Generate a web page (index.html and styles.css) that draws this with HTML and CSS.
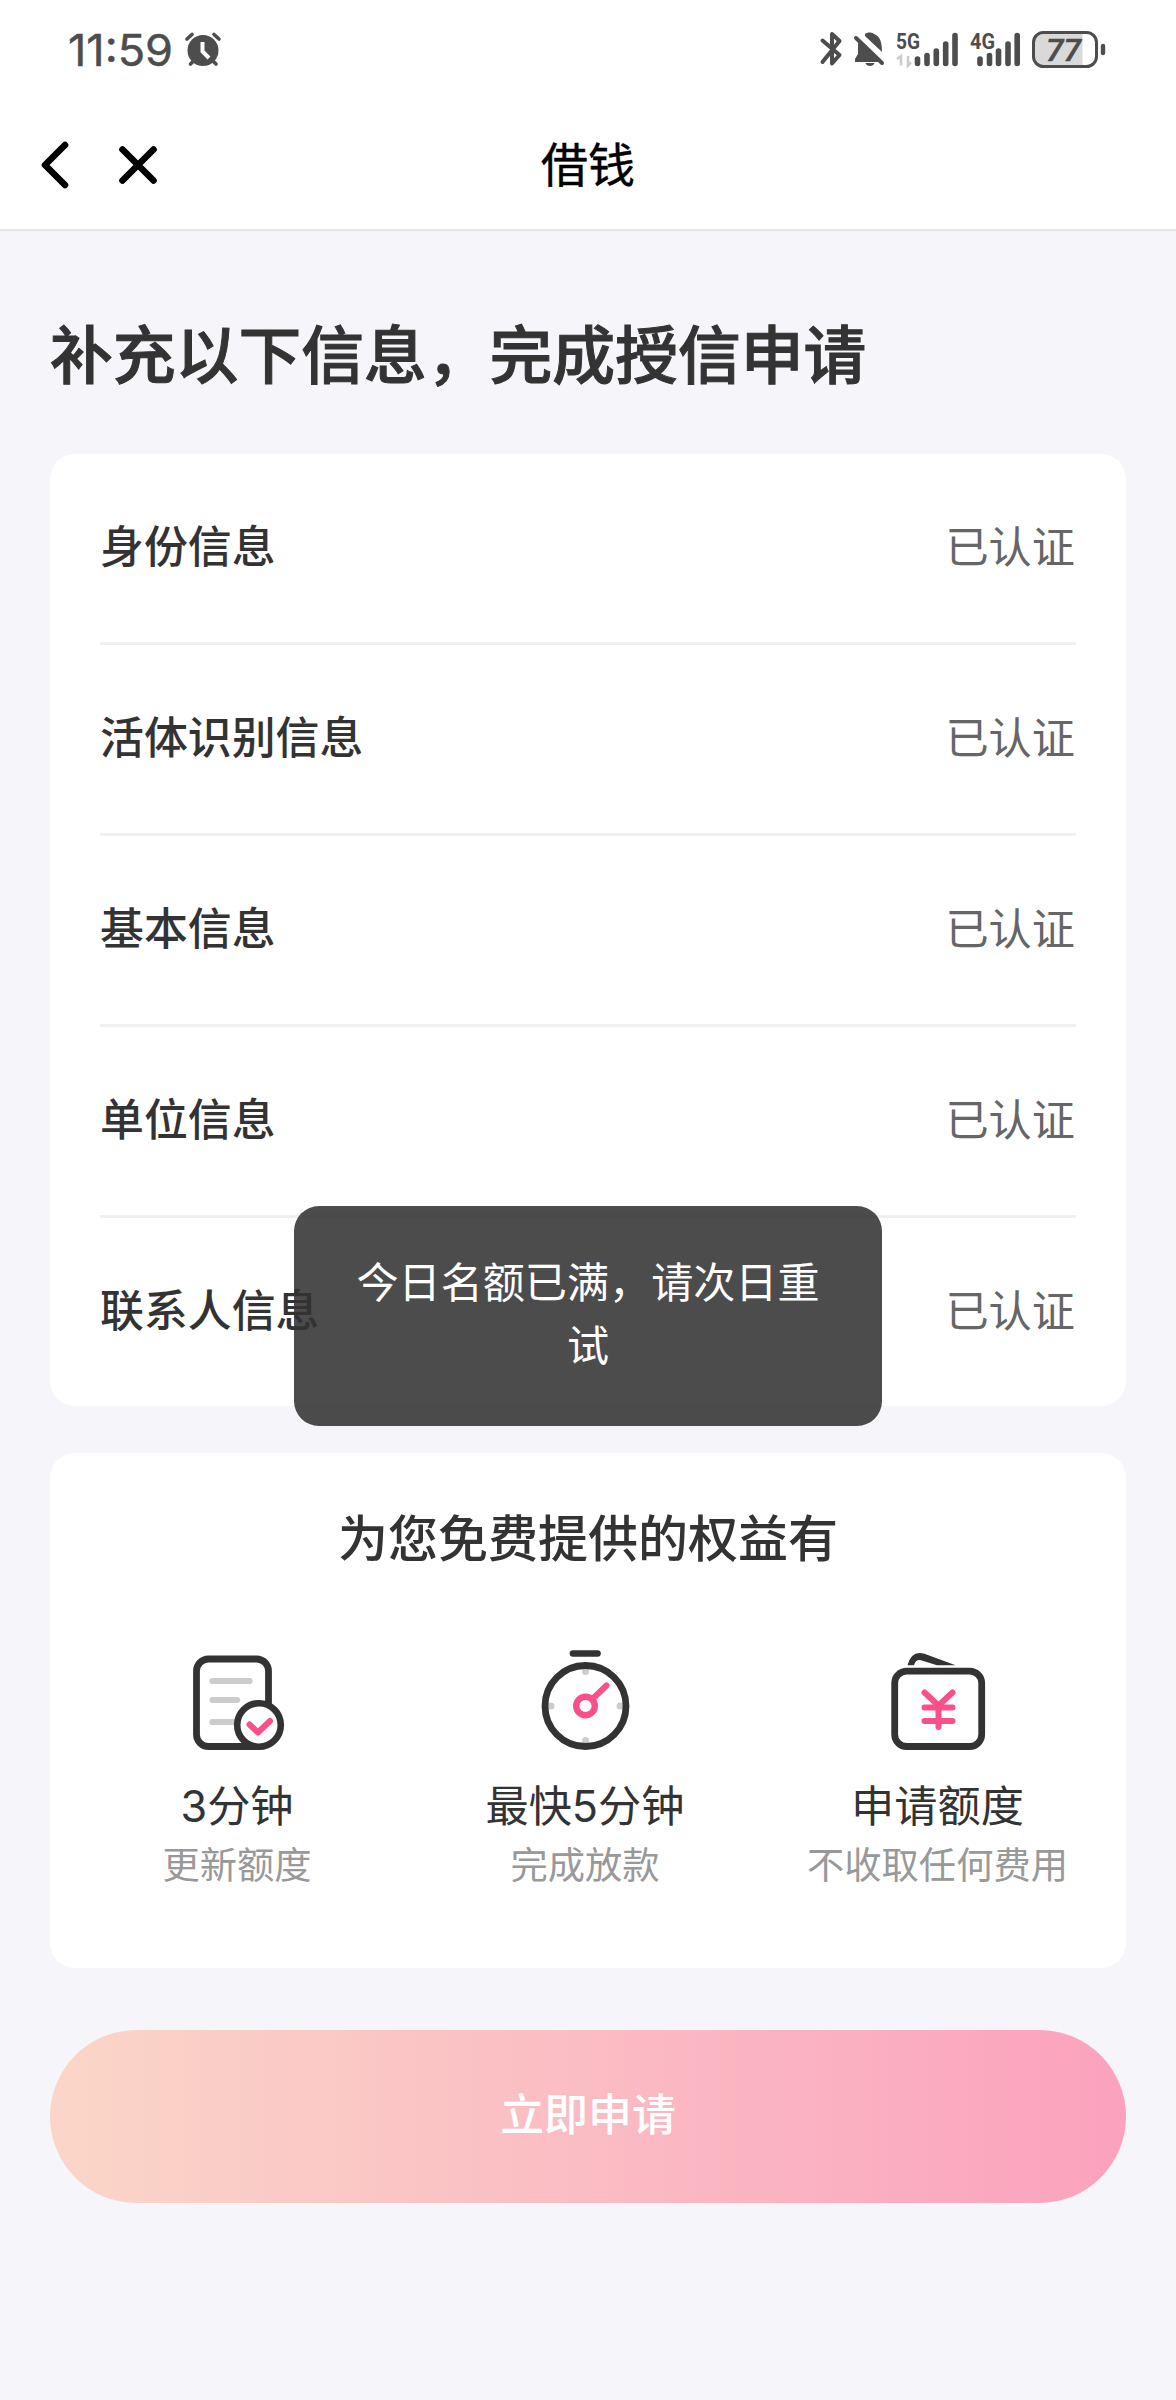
FILE: index.html
```html
<!DOCTYPE html>
<html lang="zh-CN">
<head>
<meta charset="utf-8">
<title>借钱</title>
<link rel="stylesheet" href="styles.css">
</head>
<body>
<header class="top">
  <div class="status">
    <div class="clock">
      <svg class="time" width="110" height="60" viewBox="66 20 110 60"><text x="68" y="65.500" textLength="105" lengthAdjust="spacingAndGlyphs">11:59</text></svg>
      <svg width="40" height="40" viewBox="183 30 40 40" fill="none" stroke="#4d4d4d" stroke-linecap="round">
        <circle cx="203" cy="50.500" r="15.500" fill="#4d4d4d" stroke="none"/>
        <path d="M187 39l5-4.500M219 39l-5-4.500M190.500 64l5-5M216 64l-5-5" stroke-width="3.600"/>
        <path d="M202.500 42v9.500l6.500 6.500" stroke="#fff" stroke-width="4" stroke-linecap="butt"/>
      </svg>
    </div>
    <svg class="signals" width="292" height="50" viewBox="816 25 292 50">
      <path d="M822.500 40.500l17 14.500-7.500 8.500V34l7.500 7L822.500 62" fill="none" stroke="#4d4d4d" stroke-width="4" stroke-linecap="round" stroke-linejoin="round"/>
      <path d="M865 34c2-2 7-2 9 0 6 2 8 8 8 18l-17-16zM860 40l22 22h-27v-3l3-5V44zM865.500 63h9c-1 4-8 4-9 0z" fill="#4d4d4d"/>
      <path d="M856 38l26 25" stroke="#4d4d4d" stroke-width="4" stroke-linecap="round"/>
      <text class="net" x="896" y="48.500" textLength="24" lengthAdjust="spacingAndGlyphs">5G</text>
      <g stroke="#ccc" stroke-width="2.600" fill="none"><path d="M897 59l4-3v9.500M908 56v9.500l3-3"/></g>
      <g stroke="#4d4d4d" stroke-width="5.600" stroke-linecap="round">
        <path d="M917.500 59v4.500M927 55.500v8M936.300 51v12.500M945.700 44v19.500M955 35.500v28"/>
        <path d="M980 59v4.500M989.500 55.500v8M998.500 51v12.500M1008 44v19.500M1017.200 35.500v28"/>
      </g>
      <text class="net" x="970" y="48.500" textLength="25" lengthAdjust="spacingAndGlyphs">4G</text>
      <path d="M1044 34h38.500v31.500H1044q-10 0-10-10V44q0-10 10-10z" fill="#d9d9d9"/>
      <rect x="1033.500" y="32.500" width="63" height="34" rx="10" fill="none" stroke="#4d4d4d" stroke-width="3"/>
      <path d="M1103 46v7" stroke="#4d4d4d" stroke-width="4.400" stroke-linecap="round"/>
      <text class="charge" x="1046" y="61" textLength="35" lengthAdjust="spacingAndGlyphs">77</text>
    </svg>
  </div>
  <nav class="nav">
    <svg class="nav-icons" width="124" height="60" viewBox="36 135 124 60" fill="none" stroke="#000" stroke-width="6.600" stroke-linecap="round" stroke-linejoin="round">
      <path d="M65 145L45 165l20 20"/><path d="M122.500 149.500l31 31M153.500 149.500l-31 31"/>
    </svg>
    <h1 class="nav-title">借钱</h1>
  </nav>
</header>
<main class="page">
  <h2 class="heading">补充以下信息，完成授信申请</h2>
  <ul class="card list">
    <li class="row"><span>身份信息</span><span class="done">已认证</span></li>
    <li class="row"><span>活体识别信息</span><span class="done">已认证</span></li>
    <li class="row"><span>基本信息</span><span class="done">已认证</span></li>
    <li class="row"><span>单位信息</span><span class="done">已认证</span></li>
    <li class="row"><span>联系人信息</span><span class="done">已认证</span></li>
  </ul>
  <section class="card benefits">
    <h3 class="benefits-title">为您免费提供的权益有</h3>
    <div class="benefit-grid">
      <div class="benefit">
        <svg width="110" height="110" viewBox="182 1645 110 110" fill="none" stroke="#333" stroke-linecap="round" stroke-linejoin="round">
          <rect x="196.500" y="1659" width="72" height="87.500" rx="12" stroke-width="6.800"/>
          <path d="M212.500 1681h37M212.500 1700h24.500M212.500 1722h27" stroke="#ccc" stroke-width="6.200"/>
          <circle cx="259" cy="1725" r="21.800" fill="#fff" stroke-width="6.600"/>
          <path d="M249.500 1724.500l8.500 8 12-11.500" stroke="#f9508a" stroke-width="6"/>
        </svg>
        <p class="benefit-name">3分钟</p>
        <p class="benefit-note">更新额度</p>
      </div>
      <div class="benefit">
        <svg width="110" height="110" viewBox="530 1645 110 110" fill="none" stroke="#333" stroke-linecap="round">
          <path d="M573 1653.500h24.500" stroke-width="6.600"/>
          <g fill="#ccc" stroke="none"><circle cx="585.500" cy="1671.500" r="3.500"/><circle cx="585.500" cy="1740.500" r="3.500"/><circle cx="551" cy="1706" r="3.500"/><circle cx="620" cy="1706" r="3.500"/></g>
          <circle cx="585.500" cy="1706" r="40.500" stroke-width="6.800"/>
          <g stroke="#f9508a"><circle cx="585.500" cy="1706" r="9.300" stroke-width="6.400"/><path d="M593 1698.500l13.500-13" stroke-width="6"/></g>
        </svg>
        <p class="benefit-name">最快5分钟</p>
        <p class="benefit-note">完成放款</p>
      </div>
      <div class="benefit">
        <svg width="110" height="110" viewBox="884 1645 110 110" fill="none" stroke="#333" stroke-linecap="round" stroke-linejoin="round">
          <path d="M908.500 1665.200h6.500q1.500-6 7-5l16 5h18.500l-31-11.500q-13-4-17 11.500z" fill="#333" stroke="none"/>
          <rect x="895.700" y="1671.200" width="87" height="75.300" rx="12" stroke-width="6.800"/>
          <path d="M925.500 1692.500l14 13 14-13M925.500 1707.500h28M925.500 1721h28M939.500 1706v21" stroke="#f9508a" stroke-width="6"/>
        </svg>
        <p class="benefit-name">申请额度</p>
        <p class="benefit-note">不收取任何费用</p>
      </div>
    </div>
  </section>
  <button class="apply" type="button">立即申请</button>
</main>
<div class="toast" role="alert">今日名额已满，请次日重试</div>
</body>
</html>
```
FILE: styles.css
```css
* { box-sizing: border-box; margin: 0; padding: 0; }
body {
  position: relative;
  min-height: 2400px;
  background: #f5f5fa;
  color: #333;
  font-family: "Noto Sans CJK SC", sans-serif;
}
.top { height: 231px; background: #fff; border-bottom: 2px solid #e5e5e5; }
.status {
  display: flex;
  justify-content: space-between;
  align-items: center;
  height: 100px;
  padding: 0 68px 0 66px;
}
.clock { display: flex; align-items: center; gap: 7px; }
.time { overflow: visible; }
.time text { font: 400 44px Inter, sans-serif; fill: #4d4d4d; stroke: #4d4d4d; stroke-width: .5px; }
.net { font: 700 22px Roboto, sans-serif; fill: #4d4d4d; }
.charge { font: italic 500 32px Roboto, sans-serif; fill: #4d4d4d; stroke: #4d4d4d; stroke-width: .6px; }
.nav {
  display: grid;
  grid-template-columns: 160px 1fr 160px;
  align-items: center;
  height: 129px;
  padding: 0 36px;
}
.nav-title {
  padding-bottom: 5px;
  color: #000;
  font-size: 47px;
  font-weight: 400;
  line-height: 70px;
  text-align: center;
  -webkit-text-stroke: .4px #000;
}
.page { display: flex; flex-direction: column; padding: 75px 50px 0; }
.heading {
  font-size: 62.800px;
  font-weight: 500;
  line-height: 90px;
  white-space: nowrap;
  -webkit-text-stroke: 1px #333;
}
.card { background: #fff; border-radius: 25px; }
.list { margin-top: 58px; padding: 0 50px; list-style: none; }
.row {
  display: flex;
  justify-content: space-between;
  align-items: center;
  height: 191px;
  padding-bottom: 9px;
  font-size: 43.900px;
  font-weight: 500;
  border-bottom: 3px solid #f0f0f0;
}
.row:last-child { height: 188px; border-bottom: 0; }
.done { margin-right: 1px; color: #666; font-size: 43.200px; font-weight: 400; }
.benefits { height: 515px; margin-top: 47px; padding-top: 47px; }
.benefits-title { font-size: 50px; font-weight: 500; line-height: 70px; text-align: center; }
.benefit-grid {
  display: grid;
  grid-template-columns: 268px 428px 274px;
  justify-content: start;
  margin-top: 75px;
  padding-left: 53px;
}
.benefit { display: flex; flex-direction: column; align-items: center; }
.benefit-name {
  margin-top: 19px;
  font-family: Inter, "Noto Sans CJK SC", sans-serif;
  font-size: 43.200px;
  line-height: 64px;
  white-space: nowrap;
}
.benefit:last-child { margin-left: 3px; }
.benefit-note { margin-top: -2px; color: #999; font-size: 37.300px; line-height: 54px; white-space: nowrap; }
.apply {
  height: 173px;
  margin-top: 62px;
  padding-bottom: 9px;
  border: 0;
  border-radius: 87px;
  background: linear-gradient(90deg, #fad6c8, #fba2be);
  color: #fff;
  font: 500 43.900px "Noto Sans CJK SC", sans-serif;
}
.toast {
  position: absolute;
  left: 294px;
  top: 1206px;
  width: 588px;
  height: 220px;
  padding: 42px 62px;
  border-radius: 25px;
  background: rgba(50, 50, 50, .875);
  color: #fff;
  font-size: 42.100px;
  line-height: 63px;
  text-align: center;
}
```
